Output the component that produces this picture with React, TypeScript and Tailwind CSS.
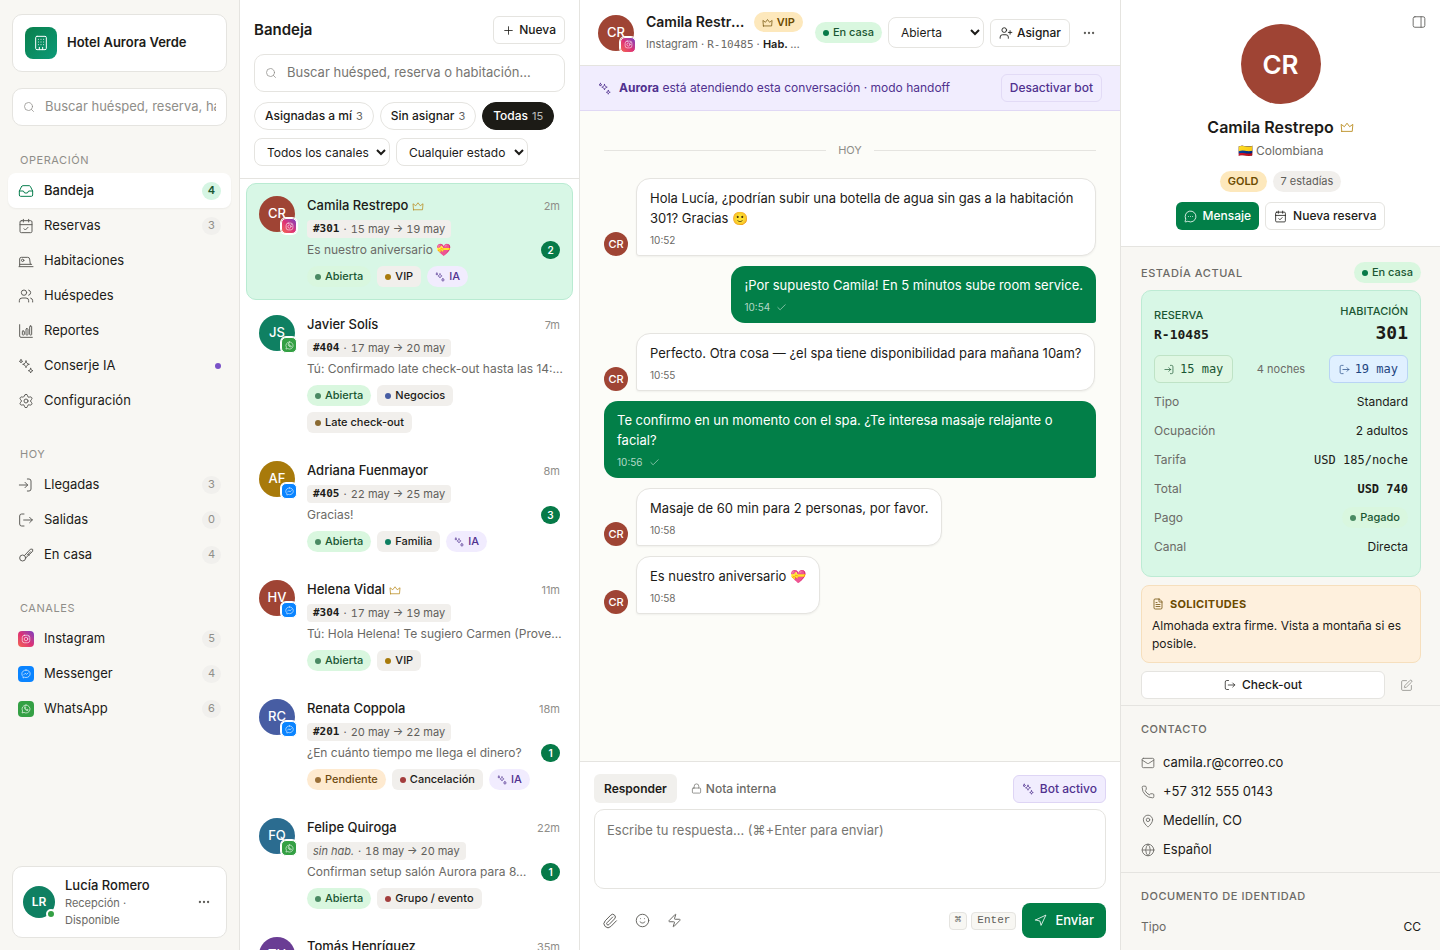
import React, { useState } from 'react';
import type { ReactNode } from 'react';
import {
  CalendarCheck,
  Check,
  Ellipsis,
  FileText,
  Globe,
  Inbox,
  Lock,
  Mail,
  MapPin,
  MessageCircleMore,
  Navigation,
  Paperclip,
  Phone,
  Plus,
  Search,
  Settings,
  Smile,
  SquarePen,
  UserPlus,
  Users,
  Zap,
} from 'lucide-react';

type IconProps = { size?: number; className?: string };
type Channel = 'instagram' | 'messenger' | 'whatsapp';

function Svg({ size = 16, className, children }: IconProps & { children: ReactNode }) {
  return (
    <svg
      width={size}
      height={size}
      viewBox="0 0 24 24"
      fill="none"
      stroke="currentColor"
      strokeWidth={1.5}
      strokeLinecap="round"
      strokeLinejoin="round"
      className={className}
      aria-hidden="true"
    >
      {children}
    </svg>
  );
}

const SparklesIcon = (p: IconProps) => (
  <Svg {...p}>
    <path d="M12 4.500c.6 3.100 1.900 4.400 5 5-3.100.6-4.400 1.900-5 5-.6-3.100-1.900-4.400-5-5 3.100-.6 4.400-1.900 5-5Z" />
    <path d="M4.500 2.500c.3 1.700.8 2.200 2.500 2.500-1.700.3-2.200.8-2.500 2.500C4.200 5.800 3.700 5.300 2 5c1.700-.3 2.200-.8 2.500-2.500Z" />
    <path d="M19 15.500c.4 2.300 1.200 3.100 3.500 3.500-2.300.4-3.100 1.200-3.500 3.500-.4-2.300-1.200-3.100-3.500-3.500 2.300-.4 3.100-1.200 3.500-3.500Z" />
  </Svg>
);

const LoginIcon = (p: IconProps) => (
  <Svg {...p}>
    <path d="M14 3h2.500a3 3 0 0 1 3 3v12a3 3 0 0 1-3 3H14" />
    <path d="M2 12h12.500M10.500 8l4 4-4 4" />
  </Svg>
);

const LogoutIcon = (p: IconProps) => (
  <Svg {...p}>
    <path d="M9 3H5.500a3 3 0 0 0-3 3v12a3 3 0 0 0 3 3H9" />
    <path d="M8.500 12H21.500M17.500 8l4 4-4 4" />
  </Svg>
);

const CrownIcon = (p: IconProps) => (
  <Svg {...p}>
    <path d="M3 19.500h18l1-12-5.500 4L12 5.500l-4.500 6L2 7.500l1 12Z" />
  </Svg>
);

const BuildingIcon = (p: IconProps) => (
  <Svg {...p}>
    <rect x="4" y="2" width="16" height="20" rx="2" />
    <path d="M8 6.500h.01M12 6.500h.01M16 6.500h.01M8 10.500h.01M12 10.500h.01M16 10.500h.01M8 14.500h.01M12 14.500h.01M16 14.500h.01M9.500 22v-3.500M14.500 22v-3.500" />
  </Svg>
);

const BedIcon = (p: IconProps) => (
  <Svg {...p}>
    <path d="M1.500 20.500h21M2.500 17h18" />
    <path d="M2.500 20V9a2.500 2.500 0 0 1 2.500-2.500h9.500a3 3 0 0 1 3 2.600l1 7.900" />
    <circle cx="7" cy="11" r="1.800" />
  </Svg>
);

const ChartIcon = (p: IconProps) => (
  <Svg {...p}>
    <path d="M2.500 2.500v17a2 2 0 0 0 2 2h17" />
    <rect x="6.500" y="12" width="3" height="6" rx="1" />
    <rect x="12" y="8.500" width="3" height="9.500" rx="1" />
    <rect x="17.500" y="4.500" width="3" height="13.500" rx="1" />
  </Svg>
);

const KeyIcon = (p: IconProps) => (
  <Svg {...p}>
    <circle cx="7" cy="16.500" r="4.500" />
    <path d="m10 12.500 9-9.500 3 .5v3l-9.500 9M14 12l5-5M16.500 12.500 15 11" />
  </Svg>
);

const PanelIcon = (p: IconProps) => (
  <Svg {...p}>
    <rect x="2" y="3" width="20" height="18" rx="3" />
    <path d="M15.500 3v18" />
  </Svg>
);

const InstagramIcon = (p: IconProps) => (
  <Svg {...p}>
    <rect x="3" y="3" width="18" height="18" rx="5.500" />
    <circle cx="12" cy="12" r="4.300" />
    <path d="M17.400 6.600h.01" />
  </Svg>
);

const MessengerIcon = (p: IconProps) => (
  <Svg {...p}>
    <path d="M12 2.500c5.500 0 10 4 10 9s-4.500 9-10 9c-1.200 0-2.400-.2-3.500-.6L5 21.500v-3.300c-1.900-1.700-3-4-3-6.700 0-5 4.500-9 10-9Z" />
    <path d="m7 13.500 3-3.200 3.500 2.500L17 9.500" />
  </Svg>
);

const WhatsAppIcon = (p: IconProps) => (
  <Svg {...p}>
    <path d="M12 2.500a9.500 9.500 0 1 1-4.700 17.700L2.500 21.500l1.300-4.700A9.500 9.500 0 0 1 12 2.500Z" />
    <path d="M8.500 7.500c-1.500 4 4 9.500 8 8l.5-2-2.500-1.200-1.200 1.200c-1.300-.6-2.200-1.500-2.800-2.800l1.200-1.200L10.500 7Z" />
  </Svg>
);

const channelIcons = { instagram: InstagramIcon, messenger: MessengerIcon, whatsapp: WhatsAppIcon };
const channelColors = {
  instagram: 'bg-linear-45 from-[#f4644d] via-[#dc2f76] to-[#7b34c0]',
  messenger: 'bg-[#0a84ff]',
  whatsapp: 'bg-[#34a044]',
};

function ChannelBadge({ channel, overlay }: { channel: Channel; overlay?: boolean }) {
  const Icon = channelIcons[channel];
  return (
    <span
      className={`${channelColors[channel]} flex items-center justify-center text-white ${
        overlay
          ? 'absolute -right-0.5 -bottom-0.5 size-4 rounded-[5px] border border-white ring-1 ring-white'
          : 'size-4 rounded-[4px]'
      }`}
    >
      <Icon size={overlay ? 9 : 10} />
    </span>
  );
}

function Avatar({ initials, color, channel }: { initials: string; color: string; channel?: Channel }) {
  return (
    <div
      className={`relative flex size-9 shrink-0 items-center justify-center rounded-full text-[13px] font-medium text-white ${color}`}
    >
      {initials}
      {channel && <ChannelBadge channel={channel} overlay />}
    </div>
  );
}

const pillStyles = {
  green: 'rounded-full bg-[#d9f7df] text-[#1a5632]',
  amber: 'rounded-full bg-[#feead0] text-[#6f4a10]',
  gray: 'rounded-md bg-[#f1efec] text-[#1c1b18]',
  violet: 'rounded-full bg-[#f1ecfe] text-[#50318f]',
};

function Pill({ tone, dot, children }: { tone: keyof typeof pillStyles; dot?: string; children: ReactNode }) {
  return (
    <span
      className={`inline-flex h-[21px] items-center gap-1 px-2 text-[11px] font-medium whitespace-nowrap ${pillStyles[tone]}`}
    >
      {dot && <span className={`size-1.5 rounded-full ${dot}`} />}
      {children}
    </span>
  );
}

type NavEntry = { label: string; icon: ReactNode; count?: number; active?: boolean; dot?: boolean };

const navSections: { title: string; items: NavEntry[] }[] = [
  {
    title: 'Operación',
    items: [
      { label: 'Bandeja', icon: <Inbox size={16} strokeWidth={1.5} />, count: 4, active: true },
      { label: 'Reservas', icon: <CalendarCheck size={16} strokeWidth={1.5} />, count: 3 },
      { label: 'Habitaciones', icon: <BedIcon /> },
      { label: 'Huéspedes', icon: <Users size={16} strokeWidth={1.5} /> },
      { label: 'Reportes', icon: <ChartIcon /> },
      { label: 'Conserje IA', icon: <SparklesIcon />, dot: true },
      { label: 'Configuración', icon: <Settings size={16} strokeWidth={1.5} /> },
    ],
  },
  {
    title: 'Hoy',
    items: [
      { label: 'Llegadas', icon: <LoginIcon />, count: 3 },
      { label: 'Salidas', icon: <LogoutIcon />, count: 0 },
      { label: 'En casa', icon: <KeyIcon />, count: 4 },
    ],
  },
  {
    title: 'Canales',
    items: [
      { label: 'Instagram', icon: <ChannelBadge channel="instagram" />, count: 5 },
      { label: 'Messenger', icon: <ChannelBadge channel="messenger" />, count: 4 },
      { label: 'WhatsApp', icon: <ChannelBadge channel="whatsapp" />, count: 6 },
    ],
  },
];

function NavItem({ item }: { item: NavEntry }) {
  return (
    <a
      href="#"
      className={`flex h-[35px] items-center gap-2.5 rounded-lg px-2.5 text-[13px] ${
        item.active ? 'bg-white font-medium shadow-xs' : ''
      }`}
    >
      <span className={item.active ? 'text-[#0a7f50]' : 'text-[#5f5e5a]'}>{item.icon}</span>
      <span className="flex-1">{item.label}</span>
      {item.count !== undefined && (
        <span
          className={`flex h-[18px] min-w-[19px] items-center justify-center rounded-full text-[11px] ${
            item.active ? 'bg-[#d5f5e3] font-semibold text-[#1a5632]' : 'bg-[#f1f0ed] text-[#8f8e89]'
          }`}
        >
          {item.count}
        </span>
      )}
      {item.dot && <span className="size-1.5 rounded-full bg-[#7a52c7]" />}
    </a>
  );
}

function Sidebar() {
  return (
    <aside className="flex w-60 shrink-0 flex-col border-r border-[#e5e4e0] bg-[#f8f7f3] pt-3.5 pb-3">
      <div className="mx-3 flex items-center gap-2.5 rounded-[10px] border border-[#e5e4e0] bg-white p-3">
        <span className="flex size-8 items-center justify-center rounded-lg bg-linear-135 from-[#0a7f4b] to-[#0c9a78] text-white">
          <BuildingIcon size={16} />
        </span>
        <span className="text-[13px] font-semibold">Hotel Aurora Verde</span>
      </div>

      <label className="mx-3 mt-4 flex h-[38px] shrink-0 items-center gap-2.5 rounded-[10px] border border-[#e5e4e0] bg-white px-2.5">
        <Search size={12} strokeWidth={1.5} className="shrink-0 text-[#8f8e89]" />
        <span className="sr-only">Buscar</span>
        <input
          type="text"
          placeholder="Buscar huésped, reserva, habitación…"
          className="w-full min-w-0 text-[13px] outline-none placeholder:text-[#8f8e89]"
        />
      </label>

      <nav className="flex min-h-0 flex-1 flex-col gap-7 overflow-hidden px-2 pt-[26px]">
        {navSections.map((section) => (
          <div key={section.title}>
            <h2 className="mb-[5px] px-3 text-[11px] leading-4 tracking-wider text-[#8f8e89] uppercase">
              {section.title}
            </h2>
            {section.items.map((item) => (
              <NavItem key={item.label} item={item} />
            ))}
          </div>
        ))}
      </nav>

      <div className="mx-3 flex h-[72px] shrink-0 items-center gap-2.5 rounded-[10px] border border-[#e5e4e0] bg-white px-2.5">
        <div className="relative flex size-8 shrink-0 items-center justify-center rounded-full bg-[#0f8062] text-xs font-semibold text-white">
          LR
          <span className="absolute -right-px -bottom-px size-2.5 rounded-full border-2 border-white bg-[#34a044]" />
        </div>
        <div className="min-w-0 flex-1">
          <div className="text-[13px] leading-5 font-medium">Lucía Romero</div>
          <div className="w-20 text-[11px] leading-[17px] text-[#6b6a66]">Recepción · Disponible</div>
        </div>
        <button type="button" aria-label="Más opciones" className="flex size-6 items-center justify-center text-[#5f5e5a]">
          <Ellipsis size={14} />
        </button>
      </div>
    </aside>
  );
}

type Tag = { label: string; dot: string };

type Conversation = {
  initials: string;
  color: string;
  channel: Channel;
  name: string;
  vip?: boolean;
  time: string;
  room?: string;
  dates: string;
  preview: string;
  unread?: number;
  pending?: boolean;
  tags: Tag[];
  ai?: boolean;
};

const conversations: Conversation[] = [
  {
    initials: 'CR', color: 'bg-[#9f4434]', channel: 'instagram', name: 'Camila Restrepo', vip: true, time: '2m',
    room: '#301', dates: '15 may → 19 may', preview: 'Es nuestro aniversario 💝', unread: 2,
    tags: [{ label: 'VIP', dot: 'bg-[#a87a0b]' }], ai: true,
  },
  {
    initials: 'JS', color: 'bg-[#0f8062]', channel: 'whatsapp', name: 'Javier Solís', time: '7m',
    room: '#404', dates: '17 may → 20 may', preview: 'Tú: Confirmado late check-out hasta las 14:…',
    tags: [{ label: 'Negocios', dot: 'bg-[#475da3]' }, { label: 'Late check-out', dot: 'bg-[#8a6a32]' }],
  },
  {
    initials: 'AF', color: 'bg-[#a87a0b]', channel: 'messenger', name: 'Adriana Fuenmayor', time: '8m',
    room: '#405', dates: '22 may → 25 may', preview: 'Gracias!', unread: 3,
    tags: [{ label: 'Familia', dot: 'bg-[#0f8062]' }], ai: true,
  },
  {
    initials: 'HV', color: 'bg-[#9f4434]', channel: 'messenger', name: 'Helena Vidal', vip: true, time: '11m',
    room: '#304', dates: '17 may → 19 may', preview: 'Tú: Hola Helena! Te sugiero Carmen (Prove…',
    tags: [{ label: 'VIP', dot: 'bg-[#a87a0b]' }],
  },
  {
    initials: 'RC', color: 'bg-[#475da3]', channel: 'messenger', name: 'Renata Coppola', time: '18m',
    room: '#201', dates: '20 may → 22 may', preview: '¿En cuánto tiempo me llega el dinero?', unread: 1,
    pending: true, tags: [{ label: 'Cancelación', dot: 'bg-[#a33d3d]' }], ai: true,
  },
  {
    initials: 'FQ', color: 'bg-[#2b6c90]', channel: 'whatsapp', name: 'Felipe Quiroga', time: '22m',
    dates: '18 may → 20 may', preview: 'Confirman setup salón Aurora para 8…', unread: 1,
    tags: [{ label: 'Grupo / evento', dot: 'bg-[#a33d3d]' }],
  },
  {
    initials: 'TH', color: 'bg-[#6a3d94]', channel: 'instagram', name: 'Tomás Henríquez', time: '35m',
    room: '#102', dates: '15 may → 18 may', preview: 'Perfecto, gracias', tags: [],
  },
];

function ConversationRow({ item, selected }: { item: Conversation; selected: boolean }) {
  return (
    <li
      className={`flex gap-3 rounded-[10px] border p-3 ${
        selected ? 'border-[#b9ebd2] bg-[#d8f7e6]' : 'border-transparent'
      }`}
    >
      <Avatar initials={item.initials} color={item.color} channel={item.channel} />
      <div className="min-w-0 flex-1">
        <div className="flex h-5 items-center gap-1">
          <span className="text-[13px] font-medium">{item.name}</span>
          {item.vip && <CrownIcon size={12} className="text-[#b88a1c]" />}
          <span className="ml-auto text-[11px] text-[#8f8e89]">{item.time}</span>
        </div>
        <div className="mt-1 flex">
          <span className="flex h-[18px] items-center gap-1 rounded-[4px] bg-[#f1efec] px-1.5 text-[11px] text-[#5f5e5a] tabular-nums">
            {item.room ? (
              <span className="font-['DejaVu_Sans_Mono',monospace] font-bold text-[#1c1b18]">{item.room}</span>
            ) : (
              <i>sin hab.</i>
            )}
            <span>·</span>
            <span>{item.dates}</span>
          </span>
        </div>
        <div className="mt-0.5 flex h-5 items-center gap-3">
          <p className="min-w-0 flex-1 text-xs whitespace-nowrap text-[#6b6a66]">{item.preview}</p>
          {item.unread && (
            <span className="flex h-[18px] w-[19px] shrink-0 items-center justify-center rounded-full bg-[#067a48] text-[10px] font-semibold text-white">
              {item.unread}
            </span>
          )}
        </div>
        <div className="mt-1.5 flex flex-wrap gap-1.5">
          {item.pending ? (
            <Pill tone="amber" dot="bg-[#9a7038]">Pendiente</Pill>
          ) : (
            <Pill tone="green" dot="bg-[#4a8a63]">Abierta</Pill>
          )}
          {item.tags.map((tag) => (
            <Pill key={tag.label} tone="gray" dot={tag.dot}>{tag.label}</Pill>
          ))}
          {item.ai && (
            <Pill tone="violet">
              <SparklesIcon size={10} />
              IA
            </Pill>
          )}
        </div>
      </div>
    </li>
  );
}

const filters = [
  { label: 'Asignadas a mí', count: 3 },
  { label: 'Sin asignar', count: 3 },
  { label: 'Todas', count: 15 },
];

function InboxList() {
  const [filter, setFilter] = useState('Todas');

  return (
    <section className="flex w-[340px] shrink-0 flex-col border-r border-[#e5e4e0] bg-white">
      <header className="border-b border-[#e5e4e0] px-3.5 pt-4 pb-3">
        <div className="flex items-center justify-between">
          <h1 className="text-[15px] font-semibold">Bandeja</h1>
          <button type="button" className="flex h-7 items-center gap-1 rounded-md border border-[#e5e4e0] px-2 text-xs font-medium">
            <Plus size={13} strokeWidth={1.5} />
            Nueva
          </button>
        </div>
        <label className="mt-2.5 flex h-[38px] items-center gap-2.5 rounded-[10px] border border-[#e5e4e0] px-2.5">
          <Search size={12} strokeWidth={1.5} className="shrink-0 text-[#8f8e89]" />
          <span className="sr-only">Buscar en la bandeja</span>
          <input
            type="text"
            placeholder="Buscar huésped, reserva o habitación…"
            className="w-full min-w-0 text-[13px] outline-none placeholder:text-[#777672]"
          />
        </label>
        <div className="mt-2.5 flex gap-1.5">
          {filters.map((f) => (
            <button
              key={f.label}
              type="button"
              onClick={() => setFilter(f.label)}
              className={`flex h-7 items-center gap-1 rounded-full border px-2.5 text-xs font-medium whitespace-nowrap ${
                f.label === filter ? 'border-[#1c1b16] bg-[#1c1b16] text-white' : 'border-[#e5e4e0]'
              }`}
            >
              {f.label}
              <span className="text-[11px] font-normal opacity-70">{f.count}</span>
            </button>
          ))}
        </div>
        <div className="mt-2 flex gap-1.5">
          <select aria-label="Canal" className="h-7 w-[136px] rounded-lg border border-[#e5e4e0] bg-white pl-2 text-xs">
            <option>Todos los canales</option>
          </select>
          <select aria-label="Estado" className="h-7 w-[132px] rounded-lg border border-[#e5e4e0] bg-white pl-2 text-xs">
            <option>Cualquier estado</option>
          </select>
        </div>
      </header>
      <ul className="flex min-h-0 flex-1 flex-col gap-0.5 overflow-hidden px-1.5 pt-1">
        {conversations.map((item, i) => (
          <ConversationRow key={item.name} item={item} selected={i === 0} />
        ))}
      </ul>
    </section>
  );
}

const messages = [
  { from: 'guest', text: 'Hola Lucía, ¿podrían subir una botella de agua sin gas a la habitación 301? Gracias 🙂', time: '10:52' },
  { from: 'staff', text: '¡Por supuesto Camila! En 5 minutos sube room service.', time: '10:54' },
  { from: 'guest', text: 'Perfecto. Otra cosa — ¿el spa tiene disponibilidad para mañana 10am?', time: '10:55' },
  { from: 'staff', text: 'Te confirmo en un momento con el spa. ¿Te interesa masaje relajante o facial?', time: '10:56' },
  { from: 'guest', text: 'Masaje de 60 min para 2 personas, por favor.', time: '10:58' },
  { from: 'guest', text: 'Es nuestro aniversario 💝', time: '10:58' },
];

function Message({ from, text, time }: { from: string; text: string; time: string }) {
  if (from === 'staff') {
    return (
      <div className="flex justify-end">
        <div className="rounded-[14px] rounded-br-[3px] bg-[#027f48] px-[13px] pt-[9px] pb-2 text-white">
          <p className="text-[13px] leading-5">{text}</p>
          <p className="mt-1 flex items-center gap-1.5 text-[10px] leading-4 text-white/70">
            {time}
            <Check size={11} strokeWidth={1.5} />
          </p>
        </div>
      </div>
    );
  }
  return (
    <div className="flex items-end gap-2">
      <span className="flex size-6 shrink-0 items-center justify-center rounded-full bg-[#9f4434] text-[11px] font-medium text-white">
        CR
      </span>
      <div className="rounded-[14px] rounded-bl-[3px] border border-[#e5e4e0] bg-white px-[13px] pt-[9px] pb-[7px] shadow-xs">
        <p className="text-[13px] leading-5">{text}</p>
        <p className="mt-1 text-[10px] leading-4 text-[#6b6a66]">{time}</p>
      </div>
    </div>
  );
}

function Thread() {
  return (
    <main className="flex min-w-0 flex-1 flex-col bg-[#fcfcf8]">
      <header className="flex h-[66px] shrink-0 items-center gap-1.5 border-b border-[#e5e4e0] bg-white px-[18px]">
        <Avatar initials="CR" color="bg-[#9f4434]" channel="instagram" />
        <div className="mx-1.5 min-w-0 flex-1">
          <div className="flex items-center gap-2">
            <h2 className="min-w-0 flex-1 truncate text-sm leading-6 font-semibold">Camila Restrepo</h2>
            <span className="flex h-5 items-center gap-1 rounded-full bg-[#fde8bc] px-2 text-[11px] font-semibold text-[#6b4a00]">
              <CrownIcon size={11} />
              VIP
            </span>
          </div>
          <p className="truncate text-[11px] leading-5 text-[#6b6a66]">
            Instagram · <span className="font-['DejaVu_Sans_Mono',monospace]">R-10485</span> ·{' '}
            <span className="font-semibold text-[#1c1b18]">Hab. 301</span>
          </p>
        </div>
        <Pill tone="green" dot="bg-[#067a48]">En casa</Pill>
        <select aria-label="Estado de la conversación" className="h-[31px] w-24 rounded-lg border border-[#e5e4e0] bg-white pl-2 text-xs">
          <option>Abierta</option>
        </select>
        <button type="button" className="flex h-7 items-center gap-1 rounded-md border border-[#e5e4e0] px-2 text-xs font-medium">
          <UserPlus size={14} strokeWidth={1.5} />
          Asignar
        </button>
        <button type="button" aria-label="Más acciones" className="flex size-[26px] items-center justify-center text-[#5f5e5a]">
          <Ellipsis size={14} />
        </button>
      </header>

      <div className="flex h-[45px] shrink-0 items-center gap-2 border-b border-[#e0d8f5] bg-[#f1edfe] px-[18px] text-xs text-[#50318f]">
        <SparklesIcon size={13} />
        <p className="flex-1">
          <b className="font-bold">Aurora</b> está atendiendo esta conversación · modo handoff
        </p>
        <button type="button" className="h-7 rounded-md border border-[#e2dbf6] px-2 text-xs font-medium">
          Desactivar bot
        </button>
      </div>

      <div className="flex min-h-0 flex-1 flex-col gap-2.5 overflow-hidden px-6 pt-[31px]">
        <div className="mb-2.5 flex items-center gap-3 text-[11px] leading-4 text-[#8f8e89]">
          <span className="h-px flex-1 bg-[#e5e4e0]" />
          HOY
          <span className="h-px flex-1 bg-[#e5e4e0]" />
        </div>
        {messages.map((m) => (
          <Message key={m.text} {...m} />
        ))}
      </div>

      <form className="shrink-0 border-t border-[#e5e4e0] bg-white px-3.5 py-3">
        <div className="flex items-center">
          <button type="button" className="h-[29px] rounded-md bg-[#f1f0ed] px-2.5 text-xs font-semibold">
            Responder
          </button>
          <button type="button" className="ml-1 flex h-[29px] items-center gap-1 px-2.5 text-xs font-medium text-[#6b6a66]">
            <Lock size={11} strokeWidth={1.5} />
            Nota interna
          </button>
          <button
            type="button"
            className="ml-auto flex h-7 items-center gap-1.5 rounded-md border border-[#ded5f5] bg-[#f1edfe] px-2 text-xs font-medium text-[#50318f]"
          >
            <SparklesIcon size={12} />
            Bot activo
          </button>
        </div>
        <textarea
          aria-label="Respuesta"
          placeholder="Escribe tu respuesta… (⌘+Enter para enviar)"
          className="mt-1.5 block h-20 w-full resize-none rounded-[10px] border border-[#e5e4e0] px-3 py-2.5 text-[13px] leading-5 outline-none placeholder:text-[#777672]"
        />
        <div className="mt-3.5 flex items-center text-[#5f5e5a]">
          <div className="flex flex-1">
            <button type="button" aria-label="Adjuntar" className="flex h-8 w-8 items-center justify-center">
              <Paperclip size={16} strokeWidth={1.5} />
            </button>
            <button type="button" aria-label="Emoji" className="flex h-8 w-8 items-center justify-center">
              <Smile size={15} strokeWidth={1.5} />
            </button>
            <button type="button" aria-label="Respuestas rápidas" className="flex h-8 w-8 items-center justify-center">
              <Zap size={15} strokeWidth={1.5} />
            </button>
          </div>
          <span className="mr-1.5 flex gap-1 font-['DejaVu_Sans_Mono',monospace] text-[11px]">
            <kbd className="flex h-[18px] items-center rounded-[4px] border border-[#e5e4e0] bg-[#f8f7f3] px-[5px]">⌘</kbd>
            <kbd className="flex h-[18px] items-center rounded-[4px] border border-[#e5e4e0] bg-[#f8f7f3] px-[5px]">Enter</kbd>
          </span>
          <button type="submit" className="flex h-[35px] items-center gap-2 rounded-lg bg-[#027f48] px-3 text-[13px] font-medium text-white">
            <Navigation size={13} strokeWidth={1.5} />
            Enviar
          </button>
        </div>
      </form>
    </main>
  );
}

const stayRows: [string, ReactNode][] = [
  ['Tipo', 'Standard'],
  ['Ocupación', '2 adultos'],
  ['Tarifa', <span className="font-['DejaVu_Sans_Mono',monospace]">USD 185/noche</span>],
  ['Total', <span className="font-['DejaVu_Sans_Mono',monospace] font-bold">USD 740</span>],
  ['Pago', <Pill tone="green" dot="bg-[#4a8a63]">Pagado</Pill>],
  ['Canal', 'Directa'],
];

const contact = [
  { icon: <Mail size={14} strokeWidth={1.5} />, text: 'camila.r@correo.co' },
  { icon: <Phone size={14} strokeWidth={1.5} />, text: '+57 312 555 0143' },
  { icon: <MapPin size={14} strokeWidth={1.5} />, text: 'Medellín, CO' },
  { icon: <Globe size={14} strokeWidth={1.5} />, text: 'Español' },
];

function SectionTitle({ children }: { children: ReactNode }) {
  return <h3 className="text-[11px] leading-4 font-medium tracking-wider text-[#6b6a66] uppercase">{children}</h3>;
}

function GuestPanel() {
  return (
    <aside className="flex w-80 shrink-0 flex-col overflow-hidden border-l border-[#e5e4e0] bg-[#f8f7f3]">
      <header className="relative flex shrink-0 flex-col items-center border-b border-[#e5e4e0] bg-white pt-6 pb-4">
        <button type="button" aria-label="Ocultar panel" className="absolute top-[15px] right-3.5 text-[#5f5e5a]">
          <PanelIcon size={14} />
        </button>
        <div className="flex size-20 items-center justify-center rounded-full bg-[#9f4434] text-[26px] font-semibold text-white">
          CR
        </div>
        <h2 className="mt-[11px] flex items-center gap-1.5 text-base font-semibold">
          Camila Restrepo
          <CrownIcon size={14} className="text-[#b88a1c]" />
        </h2>
        <p className="mt-0.5 text-xs leading-5 text-[#6b6a66]">🇨🇴 Colombiana</p>
        <div className="mt-2.5 flex gap-1.5">
          <span className="flex h-[21px] items-center rounded-full bg-[#fde8bc] px-2 text-[11px] font-semibold text-[#6b4a00]">
            GOLD
          </span>
          <span className="flex h-[21px] items-center rounded-full bg-[#f1efec] px-2 text-[11px] text-[#5f5e5a]">7 estadías</span>
        </div>
        <div className="mt-2.5 flex gap-1.5">
          <button type="button" className="flex h-7 items-center gap-1.5 rounded-md bg-[#027f48] px-2 text-xs font-medium text-white">
            <MessageCircleMore size={13} strokeWidth={1.5} />
            Mensaje
          </button>
          <button type="button" className="flex h-7 items-center gap-1.5 rounded-md border border-[#e5e4e0] px-2 text-xs font-medium">
            <CalendarCheck size={13} strokeWidth={1.5} />
            Nueva reserva
          </button>
        </div>
      </header>

      <section className="shrink-0 border-b border-[#e5e4e0] pt-[15px] pr-[19px] pb-1.5 pl-5">
        <div className="flex items-center justify-between">
          <SectionTitle>Estadía actual</SectionTitle>
          <Pill tone="green" dot="bg-[#067a48]">En casa</Pill>
        </div>
        <div className="mt-[7px] rounded-[10px] border border-[#bdebd4] bg-[#d8f7e6] px-3 pt-3 pb-[15px]">
          <div className="flex items-end justify-between">
            <div>
              <div className="text-[11px] leading-4 font-medium text-[#1a5632]">RESERVA</div>
              <div className="font-['DejaVu_Sans_Mono',monospace] text-[13px] leading-6 font-bold">R-10485</div>
            </div>
            <div className="text-right">
              <div className="text-[11px] leading-4 font-medium text-[#1a5632]">HABITACIÓN</div>
              <div className="font-['DejaVu_Sans_Mono',monospace] text-lg leading-7 font-bold">301</div>
            </div>
          </div>
          <div className="mt-2 flex items-center justify-between font-['DejaVu_Sans_Mono',monospace] text-xs">
            <span className="flex h-7 items-center gap-[5px] rounded-md border border-[#bfe3c6] bg-[#dff7e3] px-[9px] text-[#1a5632]">
              <LoginIcon size={11} />
              15 may
            </span>
            <span className="font-['Inter',sans-serif] text-[11px] text-[#6b6a66]">4 noches</span>
            <span className="flex h-7 items-center gap-[5px] rounded-md border border-[#b9d4f5] bg-[#e0f0ff] px-[9px] text-[#1d4580]">
              <LogoutIcon size={11} />
              19 may
            </span>
          </div>
          <dl className="mt-1 text-xs">
            {stayRows.map(([label, value]) => (
              <div key={label} className="flex h-[29px] items-center justify-between">
                <dt className="text-[#6b6a66]">{label}</dt>
                <dd>{value}</dd>
              </div>
            ))}
          </dl>
        </div>
        <div className="mt-2 rounded-lg border border-[#f6dfbd] bg-[#fef0dd] px-2.5 py-[9px] text-xs leading-[18px]">
          <h4 className="mb-1 flex items-center gap-1.5 text-[11px] font-bold tracking-wide text-[#6b4a00]">
            <FileText size={12} strokeWidth={1.5} />
            SOLICITUDES
          </h4>
          <p>Almohada extra firme. Vista a montaña si es posible.</p>
        </div>
        <div className="mt-2 flex gap-1.5">
          <button type="button" className="flex h-7 flex-1 items-center justify-center gap-1.5 rounded-md border border-[#e5e4e0] bg-white text-xs font-medium">
            <LogoutIcon size={12} />
            Check-out
          </button>
          <button type="button" aria-label="Editar estadía" className="flex h-7 w-[30px] items-center justify-center text-[#8f8e89]">
            <SquarePen size={13} strokeWidth={1.5} />
          </button>
        </div>
      </section>

      <section className="shrink-0 border-b border-[#e5e4e0] pt-[15px] pr-[19px] pb-2 pl-5">
        <SectionTitle>Contacto</SectionTitle>
        <ul className="mt-[11px] text-[13px]">
          {contact.map((c) => (
            <li key={c.text} className="flex h-[29px] items-center gap-2">
              <span className="text-[#6b6a66]">{c.icon}</span>
              {c.text}
            </li>
          ))}
        </ul>
      </section>

      <section className="shrink-0 pt-[15px] pr-[19px] pl-5">
        <SectionTitle>Documento de identidad</SectionTitle>
        <dl className="mt-2 text-xs">
          <div className="flex h-[29px] items-center justify-between">
            <dt className="text-[#6b6a66]">Tipo</dt>
            <dd>CC</dd>
          </div>
        </dl>
      </section>
    </aside>
  );
}

export default function App() {
  return (
    <div className="flex h-screen overflow-hidden bg-white font-['Inter',sans-serif] text-[#1c1b18]">
      <Sidebar />
      <InboxList />
      <Thread />
      <GuestPanel />
    </div>
  );
}
